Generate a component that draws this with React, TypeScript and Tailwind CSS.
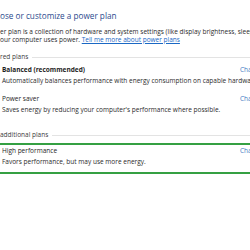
const font = { fontFamily: '"Open Sans", "Noto Sans", sans-serif' };

function GroupHeader({ label }: { label: string }) {
  return (
    <div className="flex h-[8px] items-center gap-[4px] text-[6.5px] leading-[8px] text-[#3b3b3b]">
      <span className="shrink-0 whitespace-nowrap">{label}</span>
      <div className="h-px flex-1 bg-[#e3e3e3]" />
    </div>
  );
}

function Plan({ name, desc, bold }: { name: string; desc: string; bold?: boolean }) {
  return (
    <div className="pl-[2px]">
      <div className="flex h-[8px] items-center text-[6.5px] leading-[8px]">
        <span className={`w-[238px] shrink-0 whitespace-nowrap text-[#1e1e1e] ${bold ? 'font-bold' : ''}`}>
          {name}
        </span>
        <span className="shrink-0 whitespace-nowrap text-[#3d7cc4]">Change plan settings</span>
      </div>
      <div className="mt-[3px] h-[8px] whitespace-nowrap text-[6.5px] leading-[8px] text-[#2b2b2b]">
        {desc}
      </div>
    </div>
  );
}

export default function App() {
  return (
    <div className="h-[250px] w-[250px] overflow-hidden bg-white" style={font}>
      <div className="pt-[11px]">
        <h1 className="h-[10px] whitespace-nowrap text-[8.2px] leading-[10px] text-[#2a4a8e]">
          ose or customize a power plan
        </h1>
        <div className="mt-[7px] text-[6.5px] leading-[7.6px] text-[#2b2b2b]">
          <p className="whitespace-nowrap">
            er plan is a collection of hardware and system settings (like display brightness, sleep, etc.) that
          </p>
          <p className="whitespace-nowrap">
            our computer uses power.{' '}
            <a className="text-[#1a68c4] underline">Tell me more about power plans</a>
          </p>
        </div>
      </div>

      <div className="mt-[10px]">
        <GroupHeader label="red plans" />
        <div className="mt-[5px] flex flex-col gap-[10px]">
          <Plan
            bold
            name="Balanced (recommended)"
            desc="Automatically balances performance with energy consumption on capable hardware."
          />
          <Plan
            name="Power saver"
            desc="Saves energy by reducing your computer's performance where possible."
          />
        </div>
      </div>

      <div className="mt-[17px]">
        <GroupHeader label="additional plans" />
        <div className="mt-[4px] border-y-2 border-[#35a043] pb-[6px] pt-[2px]">
          <Plan name="High performance" desc="Favors performance, but may use more energy." />
        </div>
      </div>
    </div>
  );
}
